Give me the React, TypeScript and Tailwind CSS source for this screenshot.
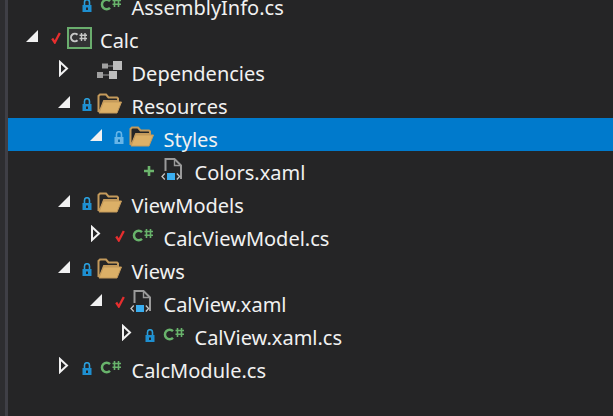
import React from "react";

type IconKind = "cs" | "folder" | "xaml" | "deps" | "proj";
type State = "lock" | "check" | "plus" | "lockfaded" | null;
type Arrow = "open" | "closed" | null;

const Row = ({ depth, arrow, state, icon, label, selected }: { depth: number; arrow: Arrow; state: State; icon: IconKind; label: string; selected?: boolean }) => {
  const pads = ["pl-[16px]", "pl-[47.5px]", "pl-[79.5px]", "pl-[110.5px]"];
  return (
    <div className={`flex h-[33px] items-center ${pads[depth]} ${selected ? "bg-[#007acc]" : ""}`}>
      <div className="flex h-full w-[24px] items-center justify-start">
        {arrow === "open" && (
          <svg width="12" height="12" viewBox="0 0 12 12" className="ml-[2px] mt-[1px]"><path d="M12 0V12H0Z" fill="#f1f1f1" /></svg>
        )}
        {arrow === "closed" && (
          <svg width="10" height="17" viewBox="0 0 10 17" className="ml-[3px]"><path d="M1 2L8 8.5L1 15Z" fill="none" stroke="#f1f1f1" strokeWidth="2" /></svg>
        )}
      </div>
      <div className="flex h-full w-[16px] items-center justify-center">
        <StateIcon state={state} />
      </div>
      <div className="flex h-full w-[30px] items-center justify-center">
        <Icon kind={icon} />
      </div>
      <span className="ml-[6px] mt-[11px] text-[20px] leading-[24px] whitespace-nowrap text-[#f1f1f1] [font-family:'Noto_Sans','Open_Sans',sans-serif]">{label}</span>
    </div>
  );
};

const StateIcon = ({ state }: { state: State }) => {
  if (state === "lock" || state === "lockfaded") {
    const faded = state === "lockfaded";
    return (
      <svg width="10" height="13" viewBox="0 0 10 13" className="ml-[-2px] mt-[5px]">
        <path d="M2.5 6V3.2a2.5 2.5 0 0 1 5 0V6" fill="none" stroke={faded ? "#66b5e8" : "#2b9fdb"} strokeWidth="1.6" />
        <rect x="0.5" y="6" width="9" height="7" fill={faded ? "#66b5e8" : "#1e8fd0"} />
        <rect x="4" y="8.5" width="2" height="2.5" fill={faded ? "#0a6fb0" : "#252526"} />
      </svg>
    );
  }
  if (state === "check")
    return (
      <svg width="10" height="12" viewBox="0 0 10 12" className="mt-[5px]"><path d="M1.2 6.5L3.8 10.5L8.8 1" fill="none" stroke="#e62e2e" strokeWidth="2.3" /></svg>
    );
  if (state === "plus")
    return (
      <svg width="10" height="10" viewBox="0 0 10 10" className="ml-[-3px] mt-[6px]"><path d="M5 0V10M0 5H10" stroke="#6cb56c" strokeWidth="2.6" /></svg>
    );
  return null;
};

const Icon = ({ kind }: { kind: IconKind }) => {
  if (kind === "cs")
    return (
      <svg width="22" height="13" viewBox="0 0 22 13" className="mt-[3px]">
        <path d="M10 3.2A4.7 4.7 0 1 0 10 9.8" fill="none" stroke="#68b36b" strokeWidth="2.5" />
        <path d="M14.5 0V9M18.5 0V9M12.5 2.5H21M12.5 6.2H21" stroke="#68b36b" strokeWidth="1.6" />
      </svg>
    );
  if (kind === "proj")
    return (
      <svg width="25" height="22" viewBox="0 0 25 22" className="mt-[4px]">
        <rect x="1" y="1" width="23" height="20" fill="#333335" stroke="#6aad6d" strokeWidth="2" />
        <path d="M10.5 7.8A3.8 3.8 0 1 0 10.5 13.2" fill="none" stroke="#c8c8c8" strokeWidth="2" />
        <path d="M14.5 6V14M18 6V14M12.5 8.3H20M12.5 11.5H20" stroke="#c8c8c8" strokeWidth="1.4" />
      </svg>
    );
  if (kind === "folder")
    return (
      <svg width="25" height="21" viewBox="0 0 25 21" className="ml-[-2px] mt-[3px]">
        <path d="M1.5 18V3L3 1.5H9L11.5 4.5H20L21 5.5V8H7L3 18Z" fill="#252526" stroke="#c49a5b" strokeWidth="2" />
        <path d="M2 20L6.5 9H24.5L20 20Z" fill="#dcb067" stroke="#c49a5b" strokeWidth="1" />
      </svg>
    );
  if (kind === "xaml")
    return (
      <svg width="22" height="24" viewBox="0 0 22 24" className="ml-[-4px] mt-[5px]">
        <path d="M4.5 13V1H13.5L20 7.5V21" fill="none" stroke="#9a9a9a" strokeWidth="2" />
        <path d="M13.5 1V7.5H20" fill="none" stroke="#9a9a9a" strokeWidth="1.4" />
        <rect x="6" y="15" width="8" height="7" fill="#3aaef0" />
        <path d="M3.8 15.5L1 18.5L3.8 21.5M15.8 15.5L18.6 18.5L15.8 21.5" fill="none" stroke="#c4c4c4" strokeWidth="1.3" />
      </svg>
    );
  return (
    <svg width="25" height="18" viewBox="0 0 25 18" className="ml-[-2px] mt-[3px]">
      <rect x="5" y="2.5" width="6" height="5" fill="#a0a0a0" />
      <rect x="0" y="11" width="6" height="6" fill="#a0a0a0" />
      <rect x="16" y="0" width="9" height="9" fill="#bcbcbc" />
      <rect x="12" y="10" width="8" height="8" fill="#bcbcbc" />
      <path d="M11 5H16M6 14H12" stroke="#a0a0a0" strokeWidth="1.2" />
    </svg>
  );
};

export default function App() {
  return (
    <div className="flex h-[416px] w-[613px] overflow-hidden bg-[#252526]">
      <div className="h-full w-[5px] shrink-0 bg-[#2d2d30]" />
      <div className="h-full w-[3px] shrink-0 bg-[#3f3f46]" />
      <div className="mt-[-14px] min-w-0 flex-1">
        <Row depth={1} arrow={null} state="lock" icon="cs" label="AssemblyInfo.cs" />
        <Row depth={0} arrow="open" state="check" icon="proj" label="Calc" />
        <Row depth={1} arrow="closed" state={null} icon="deps" label="Dependencies" />
        <Row depth={1} arrow="open" state="lock" icon="folder" label="Resources" />
        <Row depth={2} arrow="open" state="lockfaded" icon="folder" label="Styles" selected />
        <Row depth={3} arrow={null} state="plus" icon="xaml" label="Colors.xaml" />
        <Row depth={1} arrow="open" state="lock" icon="folder" label="ViewModels" />
        <Row depth={2} arrow="closed" state="check" icon="cs" label="CalcViewModel.cs" />
        <Row depth={1} arrow="open" state="lock" icon="folder" label="Views" />
        <Row depth={2} arrow="open" state="check" icon="xaml" label="CalView.xaml" />
        <Row depth={3} arrow="closed" state="lock" icon="cs" label="CalView.xaml.cs" />
        <Row depth={1} arrow="closed" state="lock" icon="cs" label="CalcModule.cs" />
      </div>
    </div>
  );
}
